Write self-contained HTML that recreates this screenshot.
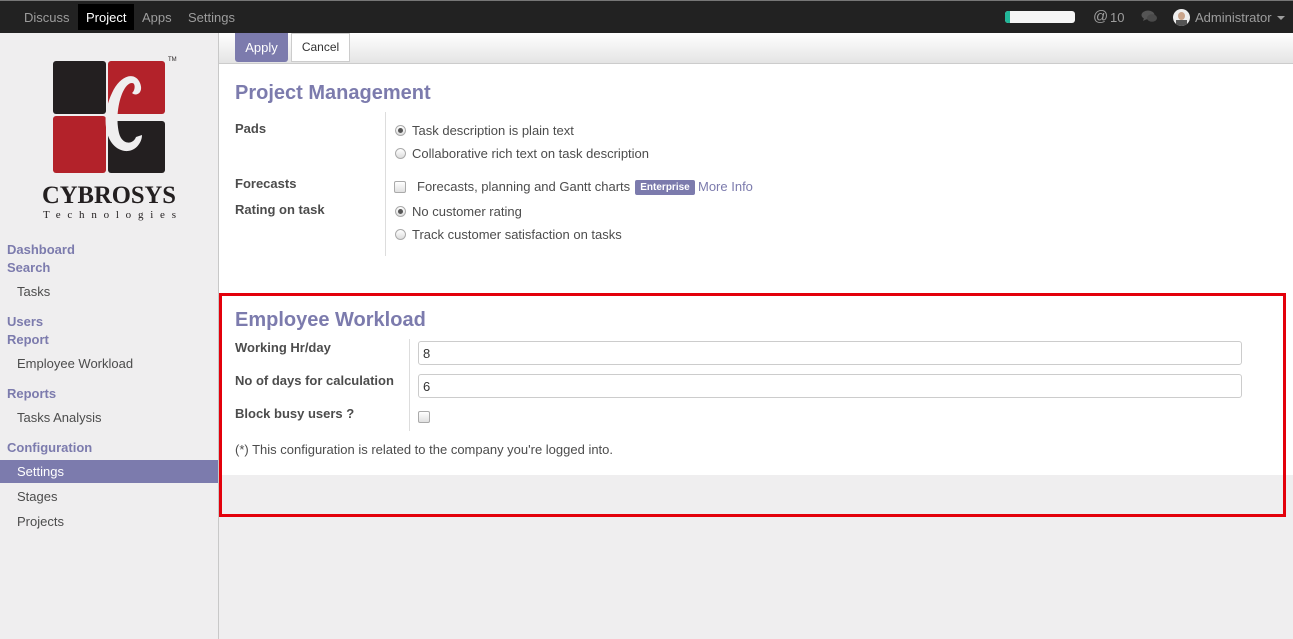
<!DOCTYPE html>
<html><head><meta charset="utf-8"><style>
*{box-sizing:border-box;margin:0;padding:0}
body{width:1293px;height:639px;overflow:hidden;background:#efeeef;font-family:"Liberation Sans",sans-serif;font-size:13px;color:#4c4c4c;position:relative}
.a{position:absolute;white-space:nowrap}
#top{position:absolute;left:0;top:0;width:1293px;height:33px;background:#222;border-top:1px solid #777}
#top .m{color:#9d9d9d;font-size:13px;top:9px}
#side{position:absolute;left:0;top:33px;width:219px;height:606px;background:#efeeef;border-right:1px solid #c8c8c8}
.h{color:#7c7bad;font-weight:bold;font-size:13px;left:7px}
.i{color:#4c4c4c;font-size:13px;left:17px}
.lab{font-weight:bold;color:#4c4c4c;font-size:13px;left:235px}
.rad{width:11px;height:11px;border-radius:50%;border:1px solid #aaa;background:linear-gradient(#fff,#ddd)}
.rad.on::after{content:"";position:absolute;left:2px;top:2px;width:5px;height:5px;border-radius:50%;background:#555}
.cb{width:12px;height:12px;border:1px solid #aaa;border-radius:2px;background:linear-gradient(#fff,#e0e0e0)}
.inp{height:24px;border:1px solid #ccc;border-radius:3px;background:#fff;padding:4px;font-size:13px;color:#333}
</style></head><body>
<div id="top">
<div class="a m" style="left:24px">Discuss</div>
<div class="a" style="left:78px;top:3px;width:56px;height:26px;background:#000"></div>
<div class="a m" style="left:86px;color:#fff">Project</div>
<div class="a m" style="left:142px">Apps</div>
<div class="a m" style="left:188px">Settings</div>
<div class="a" style="left:1005px;top:10px;width:70px;height:12px;background:#f5f5f5;border-radius:3px;overflow:hidden"><div style="width:5px;height:12px;background:#21b799"></div></div>
<div class="a m" style="left:1093px;top:7px;font-size:15px">@</div>
<div class="a m" style="left:1110px">10</div>
<svg class="a" style="left:1141px;top:9px" width="17" height="14" viewBox="0 0 17 14"><ellipse cx="7" cy="5" rx="6.5" ry="4.5" fill="#555"/><path d="M3 8 L2 11 L6 9Z" fill="#555"/><ellipse cx="11" cy="8" rx="5" ry="3.7" fill="#4a4a4a"/></svg>
<div class="a" style="left:1173px;top:8px;width:17px;height:17px;border-radius:50%;background:#eee;overflow:hidden"><div style="margin:3px auto 0;width:7px;height:8px;border-radius:50%;background:#c9a48a"></div><div style="margin:0 auto;width:11px;height:6px;background:#555"></div></div>
<div class="a m" style="left:1195px">Administrator</div>
<div class="a" style="left:1277px;top:15px;border:4px solid transparent;border-top-color:#9d9d9d"></div>
</div>
<div id="side">
<svg class="a" style="left:40px;top:20px" width="145" height="170" viewBox="0 0 145 170">
<rect x="13" y="8" width="53" height="53" rx="3" fill="#231f20"/>
<rect x="68" y="8" width="57" height="53" rx="3" fill="#b3222a"/>
<rect x="13" y="63" width="53" height="57" rx="3" fill="#b3222a"/>
<rect x="68" y="68" width="57" height="52" rx="3" fill="#231f20"/>
<path d="M100 30 C 95 18 80 22 72 40 C 60 65 65 95 85 98 C 95 99 102 90 102 82 L 96 84 C 93 92 82 92 79 80 C 74 60 82 30 92 30 C 96 30 95 38 92 40 C 96 44 104 40 100 30Z" fill="#efeeef"/>
<text x="2" y="150" textLength="134" lengthAdjust="spacingAndGlyphs" font-family="Liberation Serif" font-weight="bold" font-size="25" fill="#231f20">CYBROSYS</text>
<text x="3" y="165" textLength="133" font-family="Liberation Serif" font-size="11" fill="#231f20">Technologies</text>
<text x="128" y="8" font-size="6" fill="#231f20">TM</text>
</svg>
<div class="a h" style="top:209px">Dashboard</div>
<div class="a h" style="top:227px">Search</div>
<div class="a i" style="top:251px">Tasks</div>
<div class="a h" style="top:281px">Users</div>
<div class="a h" style="top:299px">Report</div>
<div class="a i" style="top:323px">Employee Workload</div>
<div class="a h" style="top:353px">Reports</div>
<div class="a i" style="top:377px">Tasks Analysis</div>
<div class="a h" style="top:407px">Configuration</div>
<div class="a" style="left:0;top:427px;width:218px;height:23px;background:#7c7bad"></div>
<div class="a i" style="top:431px;color:#fff">Settings</div>
<div class="a i" style="top:456px">Stages</div>
<div class="a i" style="top:481px">Projects</div>
</div>
<div class="a" style="left:219px;top:33px;width:1074px;height:31px;background:linear-gradient(#fff,#e4e4e4);border-bottom:1px solid #ccc"></div>
<div class="a" style="left:235px;top:33px;width:53px;height:29px;background:#7c7bad;border-radius:0 0 3px 3px;color:#fff;text-align:center;line-height:29px;font-size:13px">Apply</div>
<div class="a" style="left:291px;top:33px;width:59px;height:29px;background:#fff;border:1px solid #ccc;color:#333;text-align:center;line-height:27px;font-size:12px">Cancel</div>
<div class="a" style="left:219px;top:64px;width:1074px;height:411px;background:#fff"></div>
<div class="a" style="left:235px;top:82px;font-size:20px;font-weight:bold;color:#7c7bad">Project Management</div>
<div class="a lab" style="top:121px">Pads</div>
<div class="a lab" style="top:176px">Forecasts</div>
<div class="a lab" style="top:202px">Rating on task</div>
<div class="a" style="left:385px;top:112px;width:1px;height:144px;background:#ddd"></div>
<div class="a rad on" style="left:395px;top:125px"></div><div class="a" style="left:412px;top:123px">Task description is plain text</div>
<div class="a rad" style="left:395px;top:148px"></div><div class="a" style="left:412px;top:146px">Collaborative rich text on task description</div>
<div class="a cb" style="left:394px;top:181px"></div><div class="a" style="left:417px;top:179px">Forecasts, planning and Gantt charts</div>
<div class="a" style="left:635px;top:180px;width:60px;height:15px;background:#7c7bad;border-radius:2px;color:#fff;font-size:10px;font-weight:bold;text-align:center;line-height:15px">Enterprise</div>
<div class="a" style="left:698px;top:179px;color:#7c7bad">More Info</div>
<div class="a rad on" style="left:395px;top:206px"></div><div class="a" style="left:412px;top:204px">No customer rating</div>
<div class="a rad" style="left:395px;top:229px"></div><div class="a" style="left:412px;top:227px">Track customer satisfaction on tasks</div>
<div class="a" style="left:219px;top:293px;width:1067px;height:224px;border:3px solid #e3000b"></div>
<div class="a" style="left:235px;top:309px;font-size:20px;font-weight:bold;color:#7c7bad">Employee Workload</div>
<div class="a lab" style="top:340px">Working Hr/day</div>
<div class="a lab" style="top:373px">No of days for calculation</div>
<div class="a lab" style="top:406px">Block busy users ?</div>
<div class="a" style="left:409px;top:339px;width:1px;height:92px;background:#ddd"></div>
<div class="a inp" style="left:418px;top:341px;width:824px">8</div>
<div class="a inp" style="left:418px;top:374px;width:824px">6</div>
<div class="a cb" style="left:418px;top:411px"></div>
<div class="a" style="left:235px;top:442px">(*) This configuration is related to the company you're logged into.</div>
</body></html>
